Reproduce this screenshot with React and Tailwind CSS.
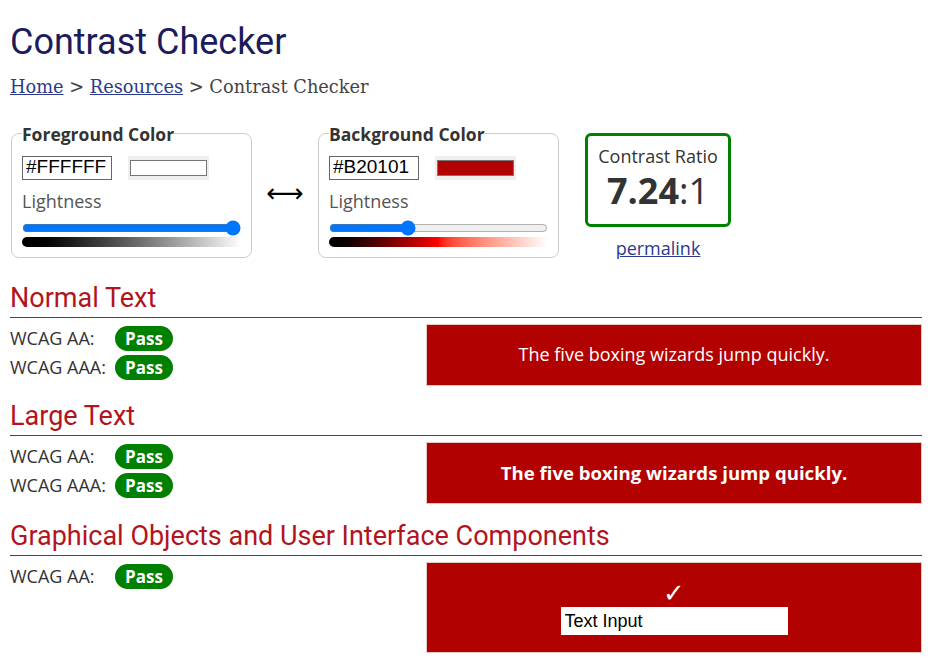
import React from 'react';

const Badge = () => (
  <span className="inline-flex items-center justify-center h-[25px] px-[10px] rounded-full bg-[#008000] text-white font-bold text-[17px] leading-none">
    Pass
  </span>
);

const Row = ({ label }) => (
  <div className="flex items-center h-[29px]">
    <span className="w-[105px] text-[18px] text-[#333]">{label}</span>
    <Badge />
  </div>
);

const ColorField = ({ legend, hex, swatch, value, gradient }) => (
  <fieldset className="border border-[#ccc] rounded-lg w-[241px] h-[134px] px-[10px] pt-[12px]">
    <legend className="font-bold text-[17.5px] text-[#333] leading-5">{legend}</legend>
    <div className="flex items-center gap-4">
      <input
        className="w-[90px] h-[24px] border border-[#666] px-[3px] text-[19px] text-black font-['Liberation_Sans',sans-serif]"
        defaultValue={hex}
      />
      <div className="bg-[#efefef] px-[2px] py-[4px]">
        <div className={`w-[77px] h-[16px] border border-[#777] ${swatch}`}></div>
      </div>
    </div>
    <div className="mt-[8px] text-[18px] text-[#555]">Lightness</div>
    <input type="range" min="0" max="100" defaultValue={value} className="w-[219px] block mt-[5px] accent-[#0075ff]" />
    <div className={`w-[219px] h-[10px] rounded-l-[5px] mt-[1px] ${gradient}`}></div>
  </fieldset>
);

const Section = ({ title, sample, rows, h, mt }) => (
  <section className={mt}>
    <h2 className="font-['Roboto',sans-serif] text-[27px] leading-[31px] text-[#b2141c] border-b border-[#b3152a] pb-[3px]">
      {title}
    </h2>
    <div className="flex mt-[6px]">
      <div className="w-[416px]">
        {rows.map(r => <Row key={r} label={r} />)}
      </div>
      <div className={`flex-1 bg-[#B20101] border border-[#e4c8c8] flex flex-col items-center justify-center ${h}`}>
        {sample}
      </div>
    </div>
  </section>
);

export default function App() {
  return (
    <div className="bg-white min-h-[663px] pl-[10px] pr-[10px] pt-[21px] font-['Open_Sans',sans-serif] text-[#333]">
      <h1 className="font-['Roboto',sans-serif] text-[36px] leading-[42px] text-[#1c1c5c]">Contrast Checker</h1>
      <div className="mt-[11px] font-['DejaVu_Serif',serif] text-[17.8px] text-[#444]">
        <a href="#" className="underline text-[#2b3a8c]">Home</a> &gt;{' '}
        <a href="#" className="underline text-[#2b3a8c]">Resources</a> &gt; Contrast Checker
      </div>

      <div className="flex items-start mt-[23px] pl-[1px]">
        <ColorField
          legend="Foreground Color"
          hex="#FFFFFF"
          swatch="bg-white"
          value={100}
          gradient="bg-gradient-to-r from-black to-white"
        />
        <div className="w-[66px] pt-[56px] text-center text-[26px] leading-none text-black font-['DejaVu_Sans',sans-serif]">⟷</div>
        <ColorField
          legend="Background Color"
          hex="#B20101"
          swatch="bg-[#B20101]"
          value={35}
          gradient="bg-gradient-to-r from-black via-[#ff0000] to-white"
        />
        <div className="ml-[26px] mt-[9px] flex flex-col items-center">
          <div className="w-[146px] h-[94px] border-[3px] border-[#008000] rounded-md flex flex-col items-center pt-[8px]">
            <div className="text-[18px] leading-6 text-[#333]">Contrast Ratio</div>
            <div className="mt-[2px] text-[36px] leading-[42px] text-[#333]">
              <span className="font-bold">7.24</span>:1
            </div>
          </div>
          <a href="#" className="mt-[8px] text-[18px] underline text-[#2b3a8c]">permalink</a>
        </div>
      </div>

      <Section
        mt="mt-[21px]"
        title="Normal Text"
        rows={['WCAG AA:', 'WCAG AAA:']}
        h="h-[62px]"
        sample={<span className="text-white text-[18px]">The five boxing wizards jump quickly.</span>}
      />
      <Section
        mt="mt-[15px]"
        title="Large Text"
        rows={['WCAG AA:', 'WCAG AAA:']}
        h="h-[62px]"
        sample={<span className="text-white text-[18.6px] font-bold">The five boxing wizards jump quickly.</span>}
      />
      <Section
        mt="mt-[17px]"
        title="Graphical Objects and User Interface Components"
        rows={['WCAG AA:']}
        h="h-[91px]"
        sample={
          <>
            <span className="text-white text-[26px] leading-[28px] font-bold font-['DejaVu_Sans',sans-serif]">✓</span>
            <input
              className="w-[227px] h-[28px] bg-white px-[4px] text-[18px] text-black font-['Liberation_Sans',sans-serif] outline-none"
              defaultValue="Text Input"
            />
          </>
        }
      />
    </div>
  );
}
